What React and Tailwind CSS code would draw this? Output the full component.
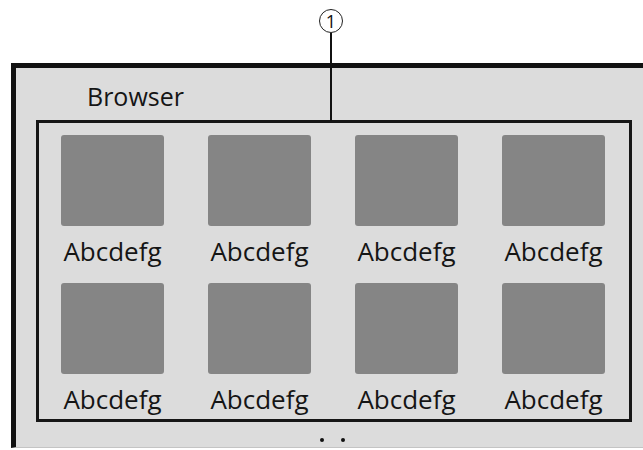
import React from "react";

const items = Array.from({ length: 8 }, () => "Abcdefg");

export default function App() {
  return (
    <div
      className="relative w-[643px] h-[450px] overflow-hidden bg-white"
      style={{ fontFamily: '"Open Sans", "Noto Sans", sans-serif' }}
    >
      <div className="ml-[11px] mt-[63px] w-[700px] h-[385px] border-l-[5px] border-t-[5px] border-b border-l-[#111] border-t-[#111] border-b-[#c4c4c4] bg-[#dcdcdc] flex flex-col">
        <div className="h-[52px] pl-[71px] pt-[16px] text-[25px] leading-[25px] font-medium text-[#151515]">
          Browser
        </div>
        <div className="ml-[20px] w-[596px] h-[302px] border-[3px] border-[#161616] pl-[22px] pt-[12px]">
          <div className="grid grid-cols-[repeat(4,103px)] gap-x-[44px] gap-y-[19.5px]">
            {items.map((t, i) => (
              <div key={i} className="flex flex-col items-center w-[103px]">
                <div className="w-[103px] h-[91px] rounded-[3px] bg-[#858585]" />
                <div className="mt-[11.5px] text-[26px] leading-[26px] font-medium text-[#151515] whitespace-nowrap">
                  {t}
                </div>
              </div>
            ))}
          </div>
        </div>
        <div className="mt-[16px] pl-[304px] flex gap-[17px]">
          <div className="w-[4px] h-[4px] rounded-full bg-[#111]" />
          <div className="w-[4px] h-[4px] rounded-full bg-[#111]" />
        </div>
      </div>

      <div className="absolute left-[319px] top-[9px] w-[24px] h-[24px] rounded-full border-[1.5px] border-[#222] bg-white flex items-center justify-center text-[18px] leading-none text-[#111]">
        1
      </div>
      <div className="absolute left-[330px] top-[33px] w-[2px] h-[88px] bg-[#111]" />
    </div>
  );
}
